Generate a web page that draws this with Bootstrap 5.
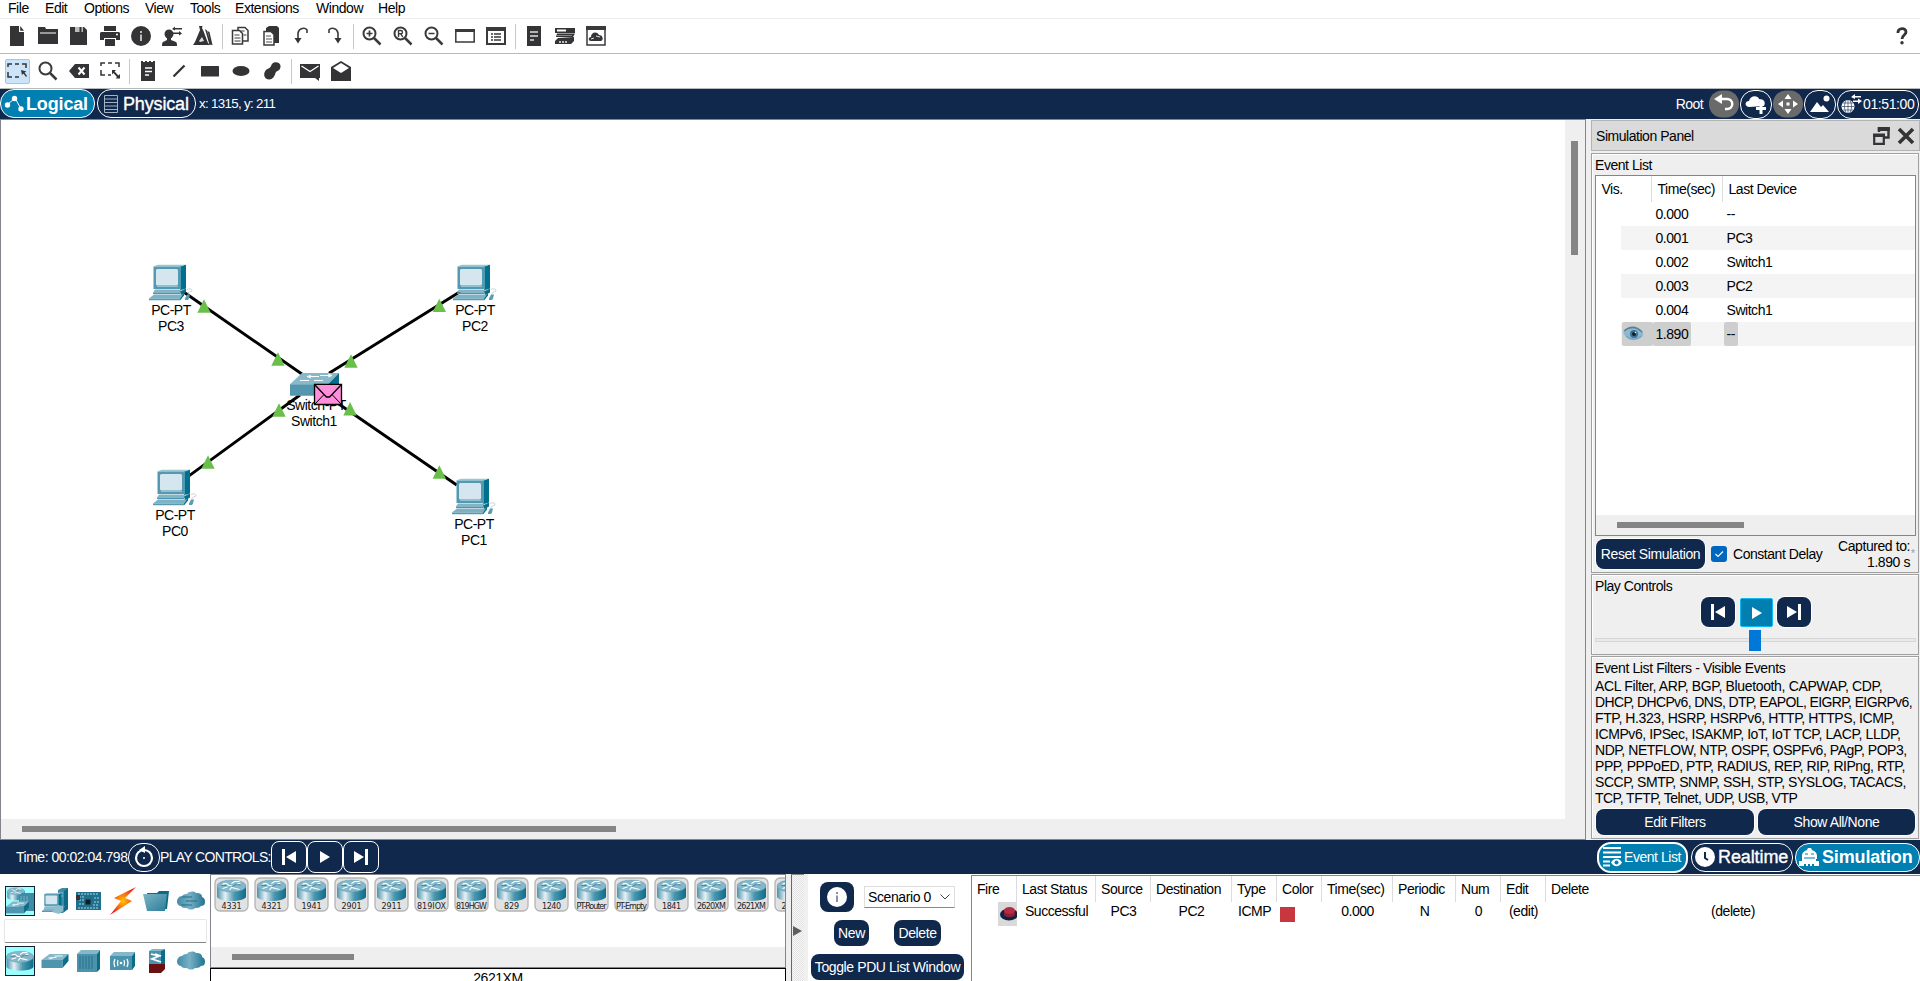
<!DOCTYPE html>
<html lang="en">
<head>
<meta charset="utf-8">
<title>Network Simulator</title>
<meta name="viewport" content="width=device-width, initial-scale=1">
<link href="https://cdn.jsdelivr.net/npm/bootstrap@5.3.0/dist/css/bootstrap.min.css" rel="stylesheet">
<style>
:root{--navy:#0f284c;--teal:#007fb0;--ink:#343436;--panel:#efefef;--edge:#82858f}
body{font:14px/16px "Liberation Sans",Arial,sans-serif;letter-spacing:-.46px;color:#000;height:981px;overflow:hidden;background:#fff}
svg{display:block;flex:none;overflow:visible}
.menubar{height:19px;border-bottom:1px solid #ececec;padding:0 0 2px 8px;line-height:15px;flex:none}
.menubar a{color:#000;text-decoration:none;flex:none}
.toolbar{height:35px;border-bottom:1px solid #b9b9b9;padding-left:1.5px;color:var(--ink);flex:none}
.tool{width:31px;height:26px;display:flex;align-items:center;justify-content:center;flex:none}
.tool.sel{background:#cce4f9;border:1px solid #91c9f7;border-radius:2px;width:25px;height:25px;margin:0 3px}
.vsep{width:1px;height:25px;background:#c8c8c8;margin:0 3px;flex:none}
.navy{background:var(--navy);color:#fff;flex:none}
.topnav{height:30px}
.pill{border:1px solid #fff;border-radius:14px;display:flex;align-items:center;height:29px;flex:none;color:#fff;white-space:nowrap;padding:0}
.pill.on{background:var(--teal)}
.big{font-size:18px;letter-spacing:-.15px}
.big.reg{-webkit-text-stroke:.35px #fff}
.workspace{width:1586px;height:721px;border:1px solid var(--edge);flex:none}
.vscroll{width:20px;background:var(--panel);padding:21px 0 0 6px}
.hscroll{height:20px;background:var(--panel);padding-top:7px;flex:none}
.thumb{background:#858585}
.side{background:var(--panel);padding-left:5px;height:721px;min-width:0;overflow:hidden}
.ptitle{height:31px;margin-top:1px;background:#dadada;border:1px solid #b3b3b3;padding:0 5px 0 4px}
.frame{border:1px solid #a0a0a0;box-shadow:inset 1px 1px #fff;width:328px;margin-top:1px;padding:0 3px}
.ptitle+.frame{margin-top:2px}
.evbox{width:321px;border:1px solid var(--edge);background:#fff;height:361px}
.evhead,.evrow{display:grid;grid-template-columns:56px 71px 1fr}
.evhead{height:26px;line-height:26px}
.evhead>div{padding-left:5.500px;border-right:1px solid #dcdcdc}
.evhead>div:last-child{border:0}
.evrow{height:24px;line-height:24px;margin-left:25px;grid-template-columns:32px 71px 1fr}
.evrow.alt{background:#f4f4f4}
.evrow span{display:inline-block;padding:0 3px;height:24px;margin-left:-.5px}
.evrow.cur span,.evrow.cur .eye{background:#cecece;border-radius:2px}
.evrow .eye{width:31px;margin-left:1px;display:flex;align-items:center;padding-left:1px}
.nbtn{background:var(--navy);color:#fff;border:0;border-radius:8px;box-shadow:0 0 0 1px #fff;display:flex;align-items:center;justify-content:center;padding:0;white-space:nowrap;flex:none;font-size:14px;line-height:16px;letter-spacing:-.4px}
.nbtn.play{background:var(--teal);border:1px solid #0bbcf2;border-radius:2px;box-shadow:none}
.chk{width:16px;height:16px;background:#0067c0;border-radius:3px}
.filters div{white-space:nowrap;height:16px}
.filters .w1{letter-spacing:-.35px}
.filters .w2{letter-spacing:-.62px}
.filters .w3{letter-spacing:-.41px}
.filters .w8{letter-spacing:-.52px}
.botnav{height:34px}
.obtn{width:36px;height:32px;border:1px solid #fff;border-radius:8px;display:flex;align-items:center;justify-content:center;flex:none}
.pick{width:30px;height:30px;display:flex;align-items:center;justify-content:center;flex:none}
.pick.sel{background:#99ffff;border:1px solid #123}
.find{width:203px;height:24px;margin:3px 0 3px 3px;border:1px solid #e7e7e7;border-bottom:1px solid #868686;border-radius:2px}
.devlist{width:576px;height:94px;border:1px solid var(--edge);overflow:hidden}
.devtile{width:34px;height:34px;flex:none}
.handle{width:13px;background:#f1f1f1 repeating-conic-gradient(#e2e2e2 0 25%,#f8f8f8 0 50%) 0 0/2px 2px;border-left:1px solid #666;border-top:1px solid #888}
.combo{width:91px;height:22px;border:1px solid #dedede;border-bottom-color:#888;padding:0 4px}
.pdu{table-layout:fixed;width:948px;border-collapse:separate;border-spacing:0}
.pdu th{font-weight:400;height:26px;padding:0 0 0 5px;border-right:1px solid #dcdcdc;white-space:nowrap}
.pdu th:last-child{border:0}
.pdu td{height:24px;padding:0 0 7px;text-align:center;white-space:nowrap}
</style>
</head>
<body class="d-flex flex-column">
<svg width="0" height="0" class="position-absolute" aria-hidden="true">
<defs>
<linearGradient id="gCyl"><stop offset="0" stop-color="#4a93ab"/><stop offset=".28" stop-color="#e6f1f5"/><stop offset=".6" stop-color="#4b97af"/><stop offset="1" stop-color="#0d6c88"/></linearGradient>
<linearGradient id="gSw" x2="1" y2="1"><stop offset="0" stop-color="#7db4c6"/><stop offset="1" stop-color="#2b7e98"/></linearGradient>
<linearGradient id="gCl"><stop offset="0" stop-color="#3f8ba5"/><stop offset=".45" stop-color="#79b0c4"/><stop offset="1" stop-color="#1f7490"/></linearGradient>
<radialGradient id="gBolt"><stop offset="0" stop-color="#ffc400"/><stop offset="1" stop-color="#f5231a"/></radialGradient>
<symbol id="pc" viewBox="0 0 44 36"><path d="M31 2l6-2v24l-6 2z" fill="#00708f"/><path d="M4.500 2L9 0h28l-5 2z" fill="#9dc6d3"/><path d="M4.500 2h27.500v22.500h-27.500z" fill="#5399b2"/><rect x="7" y="4.500" width="22" height="16.500" rx="1.500" fill="#d6e6ee"/><path d="M8 22h21" stroke="#8ec1d2" stroke-width="1"/><path d="M6 25h27l-2 3H4z" fill="#83b3c5"/><path d="M4 28h27v1.500H4z" fill="#4795ae"/><path d="M31 27l6-3v4l-5 3z" fill="#0b6f8b"/><path d="M0 34l5-4h29l-3 4z" fill="#7fb1c4"/><path d="M0 34h31v2H0z" fill="#5a9ab1"/><path d="M31 34l4-6v3l-4 5z" fill="#0e6f8b"/><path d="M36 34l2-4h3l-1 4-1 1.500h-3z" fill="#5d9db3"/><path d="M39 30c0-4 4-2 4-4s-3-2-5-1" fill="none" stroke="#a9b7bd" stroke-width=".6"/></symbol>
<symbol id="cyl" viewBox="0 0 30 22"><path d="M.5 6v11c0 2.500 6.500 4.500 14.500 4.500s14.500-2 14.500-4.500V6z" fill="url(#gCyl)"/><ellipse cx="15" cy="6.500" rx="14.500" ry="6" fill="#84b7c9" stroke="#589db3" stroke-width=".5"/><path d="M6 5c3-2 5-1 6 1h3M15 4l3-2h5m-3 3l4-1.500M6 9l5-1.500m2 3l2-2.500 4 1 4 1" fill="none" stroke="#fff" stroke-width="1.200"/><path d="M16 7l3-2 5 .3M5 6h5" fill="none" stroke="#2c7188" stroke-width=".7"/></symbol>
<symbol id="sw" viewBox="0 0 27 15"><path d="M0 7L8 1h19l-6 6z" fill="#86b8c9"/><path d="M0 7h21v8H0z" fill="#4f95ad"/><path d="M21 7l6-6v7l-6 7z" fill="#0e6d88"/><path d="M7 5l8-.6M13 3h8M11 5l-3 1" stroke="#fff" stroke-width=".9"/></symbol>
<symbol id="cloud" viewBox="0 0 28 19"><path d="M5 5c2-2 4-2 5-2 2-3 7-3 9-1 4 0 6 1 6 4 3 1 3 4 3 5 0 3-2 4-4 4-2 2-4 2-6 2-2 2-6 2-8 0-3 0-5 0-6-2-2 0-4-2-4-4 0-3 2-6 5-6z" fill="url(#gCl)"/></symbol>
<symbol id="mag" viewBox="0 0 20 20"><circle cx="7.500" cy="7.500" r="6" fill="none" stroke="#3a3a3c" stroke-width="2"/><path d="M12 12l6.500 6.500" stroke="#3a3a3c" stroke-width="2.500"/></symbol>
<symbol id="prev" viewBox="0 0 16 16"><path d="M1 0h3v16H1zM15 2v12L5 8z" fill="#fff"/></symbol>
<symbol id="next" viewBox="0 0 16 16"><path d="M12 0h3v16h-3zM1 2v12l10-6z" fill="#fff"/></symbol>
<symbol id="play" viewBox="0 0 10 12"><path d="M0 0l10 6-10 6z" fill="#fff"/></symbol>
</defs>
</svg>

<nav class="menubar d-flex align-items-center">
<a href="#" style="width:37px">File</a><a href="#" style="width:39px">Edit</a><a href="#" style="width:61px">Options</a><a href="#" style="width:45px">View</a><a href="#" style="width:45px">Tools</a><a href="#" style="width:81px">Extensions</a><a href="#" style="width:62px">Window</a><a href="#">Help</a>
</nav>

<div class="toolbar d-flex align-items-center">
<div class="tool"><svg width="20" height="20" fill="#343436"><path d="M3 0h9v6h5v14H3zM13.200 0L17 4.800h-3.800z"/></svg></div>
<div class="tool"><svg width="20" height="20" fill="#343436"><path d="M0 1h7l1 2h12v15H0z"/><path d="M2 7h16" stroke="#fff"/></svg></div>
<div class="tool"><svg width="20" height="20" fill="#343436"><path d="M1 1h14l3 3v15H1z"/><path d="M6 1h8v5H6z" fill="#bbb"/><path d="M10.500 1h2v5h-2z"/></svg></div>
<div class="tool"><svg width="20" height="20" fill="#343436"><path d="M4 0h12v5H4zM1 6h18l1 1v7h-4v-2H4v2H0V7zM5 13h10v7H5z"/><circle cx="17" cy="8.500" r="1" fill="#fff"/></svg></div>
<div class="tool"><svg width="20" height="20"><circle cx="10" cy="10" r="10" fill="#343436"/><path d="M9 8.500h2V15H9zM9 5h2v2H9z" fill="#bbb"/></svg></div>
<div class="tool"><svg width="20" height="20" fill="#343436"><circle cx="7" cy="8" r="4.500"/><path d="M5 11h4v3l5 2c1 1 1 2 1 4H0c0-2 0-3 1-4l4-2zM10 3l3-2.500V2h7v1.500h-7v1zM20 7.500L17 5v1.500h-6V8h6v1.500z"/></svg></div>
<div class="tool"><svg width="20" height="20" fill="#343436"><path d="M6 0h3.500l-.5 2 1.500 3L15 17l2 2H0l2-3L7 4z"/><path d="M12 3l2 1.500 4.500 14-2 .5zM14.500 5l2 1 3 13h-1z"/><path d="M6 15l3-4 2 4-4 1" fill="#ddd"/></svg></div>
<div class="vsep"></div>
<div class="tool"><svg width="20" height="20" fill="#fff" stroke="#3a3a3c" stroke-width="1.500"><path d="M7 1.500h7l3 3V15H7z"/><path d="M1.500 4.500h7l3 3V18h-10z"/><path d="M3.500 9h5m-5 3h6m-6 3h6M9.500 5h4m-1 4h3" stroke-width="1"/></svg></div>
<div class="tool"><svg width="20" height="20"><path d="M4 2l3-2h8l2 2v15H4z" fill="#343436"/><path d="M2 5.500h7l3 3V19H2z" fill="#fff" stroke="#3a3a3c" stroke-width="1.500"/><path d="M4 10h5m-5 3h6m-6 3h6" stroke="#555"/></svg></div>
<div class="tool"><svg width="20" height="20"><path d="M14 7V4c-2-3-8-2-9 3v8" fill="none" stroke="#3a3a3c" stroke-width="1.600"/><path d="M1.500 12h7L5 17.500z" fill="#343436"/></svg></div>
<div class="tool"><svg width="20" height="20"><path d="M5 7V4c2-3 8-2 9 3v8" fill="none" stroke="#3a3a3c" stroke-width="1.600"/><path d="M10.500 12h7L14 17.500z" fill="#343436"/></svg></div>
<div class="vsep"></div>
<div class="tool"><svg width="20" height="20"><use href="#mag" width="20" height="20"/><path d="M4.500 7.500h6m-3-3v6" stroke="#3a3a3c" stroke-width="1.700"/></svg></div>
<div class="tool"><svg width="20" height="20"><use href="#mag" width="20" height="20"/><path d="M5.500 11V4.500h2.300a1.600 1.600 0 010 3.300H6m1.800 0L9.800 11" fill="none" stroke="#3a3a3c" stroke-width="1.400"/></svg></div>
<div class="tool"><svg width="20" height="20"><use href="#mag" width="20" height="20"/><path d="M4.500 7.500h6" stroke="#3a3a3c" stroke-width="1.500"/></svg></div>
<div class="tool"><svg width="20" height="20"><rect x=".8" y="4" width="18.400" height="12" fill="#fff" stroke="#3a3a3c" stroke-width="1.500"/><path d="M0 3h20v3H0z" fill="#3a3a3c"/></svg></div>
<div class="tool"><svg width="20" height="20"><rect x="1" y="2" width="18" height="16" fill="#fff" stroke="#3a3a3c" stroke-width="2"/><path d="M0 1h20v4H0z" fill="#3a3a3c"/><path d="M5 8h2m1 0h7M5 11h2m1 0h7M5 14h2m1 0h7" stroke="#3a3a3c" stroke-width="1.300"/></svg></div>
<div class="vsep"></div>
<div class="tool"><svg width="20" height="20"><path d="M3 0h14v20H3z" fill="#343436"/><path d="M6 6h8M6 10h8M6 14h4" stroke="#ddd" stroke-width="1.300"/></svg></div>
<div class="tool"><svg width="20" height="20" fill="#343436"><path d="M0 2h20v5H0zM2 7.500h18l-2 3.500H1zM3 12l16-1v4l-3 3H0v-3z"/><path d="M2 3.500h9v2H2z" fill="#fff"/><path d="M4 16h2m1 0h2m1 0h2" stroke="#bbb" stroke-width="2"/><path d="M2 9.500h15" stroke="#999" stroke-width=".8"/></svg></div>
<div class="tool"><svg width="20" height="20"><rect x="1" y="1" width="18" height="18" fill="#fff" stroke="#3a3a3c" stroke-width="1.500"/><path d="M0 0h20v4H0z" fill="#3a3a3c"/><path d="M5 15c-3 0-3-4 0-4 0-5 6-6 8-2 4 0 5 5 2 6z" fill="#343436"/><path d="M5 13l3-1m2-2l4 1m-5 2" stroke="#ddd"/></svg></div>
<div class="tool ms-auto me-1" style="width:28px"><svg width="12" height="18"><path d="M2 6V5c0-4 8-5 8 0 0 3-4 3-4 7" fill="none" stroke="#343436" stroke-width="2.800"/><circle cx="6" cy="15.800" r="1.700" fill="#343436"/></svg></div>
</div>

<div class="toolbar d-flex align-items-center">
<div class="tool sel"><svg width="20" height="20"><path d="M1 6V3h4m3 0h4m3 0h4v4M1 11v5h4m3 0h4" fill="none" stroke="#343436" stroke-width="1.500"/><path d="M14 9l5.500 1.500-2 1L20 15l-1 1-2.500-3.500-1.500 1.500z" fill="#343436"/></svg></div>
<div class="tool"><svg width="20" height="20"><use href="#mag" width="20" height="20"/></svg></div>
<div class="tool"><svg width="20" height="20"><path d="M0 10l6-7h14v14H6z" fill="#343436"/><path d="M9.500 6.500l6 7m0-7l-6 7" stroke="#fff" stroke-width="2"/></svg></div>
<div class="tool"><svg width="20" height="20"><path d="M1 5V2h4m3 0h4m3 0h4v4M1 9v5h4m3 0h3" fill="none" stroke="#343436" stroke-width="1.500"/><path d="M12 9h4l-1.400 1.400 3.800 4L20 13v4.500h-4.500l1.500-1.500-3.600-4L12 13.500z" fill="#343436"/></svg></div>
<div class="vsep"></div>
<div class="tool"><svg width="20" height="20"><path d="M3 0h2v1h2V0h2v1h2V0h2v1h2V0h2v20H3z" fill="#343436"/><path d="M7 7h7M7 10.500h7M7 14h4" stroke="#fff" stroke-width="1.400"/></svg></div>
<div class="tool"><svg width="20" height="20"><path d="M4.500 15.500L15.500 4.500" stroke="#343436" stroke-width="2.300"/></svg></div>
<div class="tool"><svg width="20" height="20"><rect x="1" y="5" width="18" height="10.500" rx=".5" fill="#343436"/></svg></div>
<div class="tool"><svg width="20" height="20"><ellipse cx="10" cy="10" rx="8.500" ry="5" fill="#343436"/></svg></div>
<div class="tool"><svg width="20" height="20"><path d="M10 3c2-3 8-2 8.500 1.500.3 3-1 5-4 6-1.500 1-1 3-2.500 5-2 4-8 4-9.500 0-1-4 1-7 4-8 2-.5 2.500-3 3.500-4.500z" fill="#343436"/></svg></div>
<div class="vsep"></div>
<div class="tool"><svg width="20" height="20"><path d="M0 3h20v14h-1v3l-4-3H0z" fill="#343436"/><path d="M1.500 5l8.500 5.500L18.500 5" fill="none" stroke="#fff" stroke-width="1.400"/></svg></div>
<div class="tool"><svg width="20" height="20"><path d="M0 6l10-6 10 6v14H0z" fill="#343436"/><path d="M2 7l8-5 8 5-8 5z" fill="#fff"/></svg></div>
</div>

<div class="topnav navy d-flex">
<div class="pill on big fw-bold" style="width:95px;padding-left:4px"><svg style="margin-right:3px" width="18" height="17"><path d="M2 10l8-7 6 11" stroke="#fff" fill="none"/><g fill="#fff"><circle cx="2.500" cy="10" r="2.700"/><circle cx="9.500" cy="3.500" r="2.700"/><circle cx="16" cy="14" r="2.700"/></g></svg>Logical</div>
<div class="pill big reg" style="width:99px;margin-left:2px;padding-left:6px"><svg style="margin-right:5px" width="14" height="18"><path d="M.5.500h13v17H.5zM.5 4h13M.5 7.500h13M.5 11h13M.5 14.500h13" fill="none" stroke="#b5bfd0" stroke-width=".9"/></svg>Physical</div>
<div class="align-self-center" style="margin-left:3px;font-size:13.300px;letter-spacing:-.66px">x: 1315, y: 211</div>
<div class="ms-auto d-flex align-items-center">
<span style="margin-right:6px;letter-spacing:-.6px">Root</span>
<svg width="30" height="28"><rect width="30" height="27" y=".5" rx="13" fill="#6a6a6a"/><path d="M12 9h6c7 0 7 10 0 10h-2" fill="none" stroke="#fff" stroke-width="2.500"/><path d="M5 9l8-5v10z" fill="#fff"/></svg>
<div class="pill justify-content-center" style="width:32px;margin-left:1px"><svg width="22" height="20"><path d="M4 13c-5-1-4-6 0-6 1-6 9-6 10-2 5 0 7 3 5 7z" fill="#fff"/><path d="M16 9v11m-5-5.500h10" stroke="#fff" stroke-width="3"/></svg></div>
<svg style="margin:0 1px" width="30" height="28"><rect width="30" height="27" y=".5" rx="13" fill="#6a6a6a"/><path d="M15 4l3.500 5h-7zM15 24l3.500-5h-7zM5 14l5-3.500v7zM25 14l-5-3.500v7zM13.500 12.500h3v3h-3z" fill="#fff"/></svg>
<div class="pill justify-content-center" style="width:32px"><svg width="20" height="18"><path d="M0 17l7-10 4 5 2-2 6 7z" fill="#fff"/><circle cx="16.500" cy="3.500" r="3" fill="#fff"/></svg></div>
<div class="pill" style="width:82px;margin:0 1px;padding-left:3px;letter-spacing:-.4px"><svg width="22" height="22"><circle cx="7" cy="13.500" r="6.500" fill="#fff"/><path d="M1 13.500h12M7 7v13M2 10h10M2 17h10M5 7.500c-2 4-2 8 0 12m4-12c2 4 2 8 0 12" fill="none" stroke="#0f284c" stroke-width=".6"/><path d="M10 4l4-3v2h6v1.500h-6V6zM21 8l-4 3V9h-5V7.500h5v-2z" fill="#fff"/></svg>01:51:00</div>
</div>
</div>

<div class="d-flex" style="height:721px;flex:none">
<main class="workspace d-flex flex-column">
<div class="d-flex flex-fill">
<svg class="flex-fill" width="1564" height="699" viewBox="1 120 1564 699" font-size="14">
<g stroke="#000" stroke-width="2.900"><path d="M183.300 291.700L303.300 375M460 291.700L329 373.300M189.300 475.700L300 395M456.700 485L333 400"/></g>
<g fill="#6abf4b"><path id="tri" d="M204 299.300l6.700 13.400h-13.400z"/><use href="#tri" x="74" y="53"/><use href="#tri" x="235.300" y="-.6"/><use href="#tri" x="147" y="55"/><use href="#tri" x="75" y="104"/><use href="#tri" x="4" y="156"/><use href="#tri" x="146" y="102.700"/><use href="#tri" x="235.300" y="166"/></g>
<use href="#pc" x="149" y="264.500" width="44" height="36"/><use href="#pc" x="453" y="264.500" width="44" height="36"/><use href="#pc" x="153" y="469.500" width="44" height="36"/><use href="#pc" x="452" y="478.500" width="44" height="36"/>
<path d="M290 384.300L302 373h37l-11 11.300z" fill="#87b9ca"/><path d="M290 384.300h38v11.400h-38z" fill="#5297af"/><path d="M328 384.300L339 373v11l-11 11.700z" fill="#086e8b"/><path d="M309 376.500h10m-8-1l-4 1 4 1.500M320 375.500h12m-4-1.500l4 1.500-4 1.500M300 380.500h9m5 0h9" fill="none" stroke="#fff" stroke-width="1"/>
<g text-anchor="middle" fill="#000"><text x="171" y="315">PC-PT</text><text x="171" y="331">PC3</text><text x="475" y="315">PC-PT</text><text x="475" y="331">PC2</text><text x="175" y="520">PC-PT</text><text x="175" y="536">PC0</text><text x="474" y="529">PC-PT</text><text x="474" y="545">PC1</text><text x="316" y="410">Switch-PT</text><text x="314" y="426">Switch1</text></g>
<path d="M314.500 384.500h27v20h-27z" fill="#ff8edb" stroke="#000" stroke-width="1.300"/><path d="M315 404l9-9.500M341 404l-9-9.500" stroke="#000"/><path d="M315 385l9 9.500 2.500 2.500h3l2.500-2.500 9-9.500" fill="#ff8edb" stroke="#000" stroke-width="1.300"/>
</svg>
<div class="vscroll"><div class="thumb" style="width:7px;height:114px"></div></div>
</div>
<div class="hscroll"><div class="thumb" style="width:594px;height:6px;margin-left:21px"></div></div>
</main>

<aside class="side flex-fill">
<div class="ptitle d-flex align-items-center"><span class="me-auto">Simulation Panel</span>
<svg width="17" height="18" style="margin-right:8px"><path d="M6 5V1.500h9.500v9H11" fill="none" stroke="#343436" stroke-width="2.400"/><path d="M4.800 0h12v4h-12z" fill="#343436"/><path d="M1.200 8.500h9.600v8.300H1.200z" fill="#dadada" stroke="#343436" stroke-width="2.200"/><path d="M0 6.500h12v3.500H0z" fill="#343436"/></svg>
<svg width="16" height="16"><path d="M1 1l14 14M15 1L1 15" stroke="#343436" stroke-width="3.600"/></svg></div>

<section class="frame" style="height:420px">
<div style="height:21px;line-height:23px">Event List</div>
<div class="evbox d-flex flex-column">
<div class="evhead"><div>Vis.</div><div>Time(sec)</div><div>Last Device</div></div>
<div class="flex-fill">
<div class="evrow"><div></div><div><span>0.000</span></div><div><span>--</span></div></div>
<div class="evrow alt"><div></div><div><span>0.001</span></div><div><span>PC3</span></div></div>
<div class="evrow"><div></div><div><span>0.002</span></div><div><span>Switch1</span></div></div>
<div class="evrow alt"><div></div><div><span>0.003</span></div><div><span>PC2</span></div></div>
<div class="evrow"><div></div><div><span>0.004</span></div><div><span>Switch1</span></div></div>
<div class="evrow alt cur"><div class="eye"><svg width="21" height="14"><path d="M0 6c4-7 15-8 20-1v4c-6 6-14 5-17 1z" fill="#8db8d2"/><path d="M1 4c6-5 12-5 18 1" fill="none" stroke="#5b7f95" stroke-width="1.500"/><path d="M3 9c5 4 10 4 15 0" fill="none" stroke="#6f9bb8"/><circle cx="11" cy="7" r="4" fill="#3f6f92"/><circle cx="11" cy="7" r="2" fill="#10202c"/><circle cx="12.500" cy="5.500" r=".8" fill="#fff"/></svg></div><div><span>1.890</span></div><div><span>--</span></div></div>
</div>
<div class="hscroll"><div class="thumb" style="width:127px;height:6px;margin-left:21px"></div></div>
</div>
<div class="d-flex align-items-center" style="height:36px;padding-left:1px">
<button class="nbtn" style="width:109px;height:30px">Reset Simulation</button>
<div class="chk" style="margin:0 6px"><svg width="16" height="16"><path d="M4.500 8l2.500 2.500L12 5.500" fill="none" stroke="#fff" stroke-width="1.100"/></svg></div>
<span class="text-nowrap">Constant Delay</span>
<div class="ms-auto text-end text-nowrap" style="margin-right:1px;letter-spacing:-.42px">Captured to:<br>1.890 s</div><span style="color:#999;font-size:10px;width:4px">*</span>
</div>
</section>

<section class="frame" style="height:81px">
<div style="height:22px;line-height:22px">Play Controls</div>
<div class="d-flex" style="padding:0 0 0 106px;height:33px">
<button class="nbtn" style="width:34px;height:30px"><svg width="16" height="16"><use href="#prev"/></svg></button>
<button class="nbtn play" style="width:33px;height:29px;margin:1px 4px 0 5px"><svg width="10" height="12"><use href="#play"/></svg></button>
<button class="nbtn" style="width:34px;height:30px"><svg width="16" height="16"><use href="#next"/></svg></button>
</div>
<svg width="321" height="22"><rect x=".5" y="8.500" width="320" height="3" fill="#e7eaea" stroke="#d6d6d6"/><rect x="154" width="12" height="21" fill="#0078d7"/></svg>
</section>

<section class="frame" style="height:183px">
<div style="height:21px;line-height:22px;letter-spacing:-.38px">Event List Filters - Visible Events</div>
<div class="filters">
<div class="w1">ACL Filter, ARP, BGP, Bluetooth, CAPWAP, CDP,</div>
<div class="w2">DHCP, DHCPv6, DNS, DTP, EAPOL, EIGRP, EIGRPv6,</div>
<div class="w3">FTP, H.323, HSRP, HSRPv6, HTTP, HTTPS, ICMP,</div>
<div class="w3">ICMPv6, IPSec, ISAKMP, IoT, IoT TCP, LACP, LLDP,</div>
<div>NDP, NETFLOW, NTP, OSPF, OSPFv6, PAgP, POP3,</div>
<div>PPP, PPPoED, PTP, RADIUS, REP, RIP, RIPng, RTP,</div>
<div>SCCP, SMTP, SNMP, SSH, STP, SYSLOG, TACACS,</div>
<div class="w8">TCP, TFTP, Telnet, UDP, USB, VTP</div>
</div>
<div class="d-flex" style="gap:4px;padding:3px 0 0 1px"><button class="nbtn" style="width:158px;height:26px">Edit Filters</button><button class="nbtn" style="width:157px;height:26px">Show All/None</button></div>
</section>
</aside>
</div>

<div class="botnav navy d-flex align-items-center">
<span style="margin-left:16px;width:112px;white-space:nowrap;letter-spacing:-.48px">Time: 00:02:04.798</span>
<div class="pill justify-content-center" style="width:32px"><svg width="20" height="20"><circle cx="10" cy="11" r="8" fill="none" stroke="#fff" stroke-width="2.200"/><circle cx="10" cy="11" r="1" fill="#fff"/><path d="M5 3l6-4v7z" fill="#fff"/></svg></div>
<span style="width:111px;white-space:nowrap;letter-spacing:-.66px">PLAY CONTROLS:</span>
<div class="obtn"><svg width="16" height="16"><use href="#prev"/></svg></div><div class="obtn"><svg width="10" height="12"><use href="#play"/></svg></div><div class="obtn"><svg width="16" height="16"><use href="#next"/></svg></div>
<div class="ms-auto d-flex align-items-center">
<div class="pill on" style="width:91px;height:31px;border-width:2px;padding-left:4px"><svg width="19" height="20" style="margin-right:2px"><path d="M0 1h18M0 5.500h18M0 10h18M0 14.500h7M0 18.500h7" stroke="#fff" stroke-width="1.800"/><path d="M8 15.500c3-5 8-5 11 0-3 5-8 5-11 0z" fill="#fff"/><circle cx="13.500" cy="15.500" r="2" fill="#007fb0"/></svg>Event List</div>
<div class="pill big reg" style="width:102px;margin:0 2px 0 3px;padding-left:3px;letter-spacing:-.1px"><svg width="20" height="20" style="margin-right:3px"><circle cx="10" cy="10" r="10" fill="#fff"/><path d="M10 5v6l3 2" stroke="#0f284c" stroke-width="2" fill="none"/></svg>Realtime</div>
<div class="pill on big fw-bold" style="width:125px;padding-left:3px"><svg width="20" height="20" style="margin-right:3px"><path d="M3 12V9c0-4 3-5 5-6l1-2h3l1 2c2 1 5 2 5 6v3h-1v2h3v5h-5v-2h-2v2h-2v-2H9v2H7v-2H5v2H0v-5h3v-2z" fill="#fff"/><path d="M6 7h3m3 0h3M5 11h11" stroke="#007fb0" stroke-width="1"/></svg>Simulation</div>
</div>
</div>

<div class="d-flex" style="height:107px;flex:none">
<div style="width:210px;padding:12px 0 0 2px;flex:none">
<div class="d-flex" style="gap:4px;margin-left:3px">
<div class="pick sel"><svg width="28" height="28"><use href="#cyl" x="1" y="0" width="18" height="14"/><path d="M13 9l3-3h12v18H13z" fill="#3f8aa4"/><path d="M15 9v6m3-6v6m3-6v6" stroke="#77afc3"/><use href="#sw" x="0" y="13" width="23" height="14"/></svg></div>
<div class="pick" style="margin-left:1px"><svg width="28" height="28"><path d="M17 3l4-2h6v21l-5 4h-5z" fill="#3e8ba5"/><path d="M23 4l4-3v21l-4 3z" fill="#0c6c88"/><path d="M18 6h4m-4 3h4" stroke="#9ec8d6"/><use href="#pc" x="0" y="6" width="25" height="19"/><path d="M11 25l6-7 5 1v5l-4 3z" fill="#8ebdcc"/></svg></div>
<div class="pick"><svg width="28" height="28"><path d="M1 5h25v18H1z" fill="#226f8c"/><path d="M3 7h21M3 21h20M4 10h6m-6 3h5m-5 4h6m9-6h5m-5 4h5m-6 3h5" stroke="#76b6cd" stroke-width="1.300" stroke-dasharray="2 1"/><path d="M10.500 12.500h5v5h-5z" fill="#111c22"/><path d="M1 8h4v5H1z" fill="#412f2c"/></svg></div>
<div class="pick"><svg width="28" height="28"><path d="M27 0L5 11l7 3L1 28l22-14-7-3z" fill="url(#gBolt)"/></svg></div>
<div class="pick"><svg width="28" height="28"><path d="M4 6h10l2-2h10l-2 18H7z" fill="#0d6a85"/><path d="M0 7h24l-2 17H4z" fill="url(#gSw)"/></svg></div>
<div class="pick"><svg width="28" height="28"><use href="#cloud" x="0" y="4" width="28" height="19"/><path d="M5 10h10m-6 4h11M4 18h11" stroke="#236f87"/></svg></div>
</div>
<div class="find" style="margin-left:2px"></div>
<div class="d-flex" style="gap:4px;margin-left:3px">
<div class="pick sel"><svg width="28" height="22"><use href="#cyl" width="28" height="22"/></svg></div>
<div class="pick" style="margin-left:1px"><svg width="28" height="16"><use href="#sw" width="28" height="15"/></svg></div>
<div class="pick"><svg width="24" height="22"><path d="M0 4l4-4h19l-3 4z" fill="#84b7c9"/><path d="M0 4h20v18H0z" fill="#4b93ac"/><path d="M20 4l3-4v19l-3 3z" fill="#0c6c88"/><path d="M3 6v13m3-13v13m3-13v13m3-13v13m3-13v13" stroke="#296f88"/></svg></div>
<div class="pick"><svg width="26" height="18"><path d="M0 4l4-4h21l-3 4z" fill="#84b7c9"/><path d="M0 4h22v14H0z" fill="#4b93ac"/><path d="M22 4l3-4v14l-3 4z" fill="#0c6c88"/><path d="M5 7q-2 4 0 8M8 8q-1 3 0 6m9-7q2 4 0 8m-3-7q1 3 0 6" fill="none" stroke="#fff" stroke-width="1.200"/><circle cx="11" cy="11" r="1.300" fill="#fff"/></svg></div>
<div class="pick"><svg width="16" height="24"><path d="M0 2l3-2h13l-3 2z" fill="#84b7c9"/><path d="M0 2h12v13H0z" fill="#4a93ac"/><path d="M12 2l4-2v15h-4z" fill="#0c6c88"/><path d="M0 15h16v5l-4 4H0z" fill="#6a0f12"/><path d="M2 5l8 2-7 3 9 3m-6-8l6 2" stroke="#fff" stroke-width="1.800" fill="none"/></svg></div>
<div class="pick"><svg width="28" height="20"><use href="#cloud" width="28" height="19"/></svg></div>
</div>
</div>

<div style="width:576px;flex:none">
<div class="devlist d-flex flex-column">
<div class="d-flex flex-fill" style="gap:6px;padding:2px 0 0 2.500px" id="devices"></div>
<div class="hscroll"><div class="thumb" style="width:122px;height:6px;margin-left:21px"></div></div>
</div>
<div class="text-center" style="height:20px;border:1px solid #000;line-height:18px">2621XM</div>
</div>

<div style="width:5px;background:#efefef;flex:none"></div>
<div class="handle d-flex align-items-center" style="flex:none"><svg width="9" height="12" style="margin:6px 0 0 1px"><path d="M0 1l9 5-9 5z" fill="#5e5e5e"/></svg></div>
<div style="width:4px;background:#f0f0f0;flex:none"></div>

<div style="width:163px;flex:none;padding:8px 0 0 3px">
<div class="d-flex align-items-center" style="padding-left:9px;height:30px"><button class="nbtn" style="width:34px;height:30px"><svg width="20" height="20"><circle cx="10" cy="10" r="10" fill="#fff"/><path d="M9 8.500h2V15H9zM9 5h2v2H9z" fill="#8a93a3"/></svg></button>
<div class="combo d-flex align-items-center justify-content-between" style="margin-left:10px"><span style="letter-spacing:-.4px;margin-left:-1px">Scenario 0</span><svg width="10" height="6"><path d="M.5.500L5 5 9.500.5" fill="none" stroke="#444"/></svg></div></div>
<div class="d-flex" style="padding:8px 0 0 23px;gap:25px"><button class="nbtn" style="width:35px;height:26px">New</button><button class="nbtn" style="width:47px;height:26px">Delete</button></div>
<button class="nbtn" style="width:153px;height:26px;margin-top:8px;letter-spacing:-.4px">Toggle PDU List Window</button>
</div>

<div class="flex-fill" style="border:1px solid var(--edge);border-width:1px 0 0 1px;margin-top:1px">
<table class="pdu">
<colgroup><col style="width:45px"><col style="width:79px"><col style="width:55px"><col style="width:81px"><col style="width:45px"><col style="width:45px"><col style="width:71px"><col style="width:63px"><col style="width:45px"><col style="width:45px"><col></colgroup>
<tr><th>Fire</th><th>Last Status</th><th>Source</th><th>Destination</th><th>Type</th><th>Color</th><th>Time(sec)</th><th>Periodic</th><th>Num</th><th>Edit</th><th>Delete</th></tr>
<tr><td class="p-0"><div class="ms-auto" style="width:19px;height:24px;background:#d9d9d9;padding:4px 0 0 2px;overflow:hidden"><svg width="17" height="15"><ellipse cx="9" cy="8.500" rx="9" ry="6" fill="#0a2443"/><path d="M4 4v5c2 3 9 3 11 0V4z" fill="#8e1e32"/><ellipse cx="9.500" cy="4.500" rx="5.500" ry="3.500" fill="#b52a45"/></svg></div></td><td>Successful</td><td>PC3</td><td>PC2</td><td style="text-align:left;padding-left:6px">ICMP</td><td class="align-top" style="padding:5px 0 0 3px"><div style="width:15px;height:15px;background:#c8363f"></div></td><td>0.000</td><td>N</td><td>0</td><td>(edit)</td><td>(delete)</td></tr>
</table>
</div>
</div>

<script src="https://cdn.jsdelivr.net/npm/bootstrap@5.3.0/dist/js/bootstrap.bundle.min.js"></script>
<script>
// Router models on the palette: label and the width it is set to.
const models=[["4331",20],["4321",20],["1941",20],["2901",20],["2911",20],["819IOX",29],["819HGW",31],["829",15],["1240",19],["PT-Router",30],["PT-Empty",31],["1841",19],["2620XM",29],["2621XM",29],["2811",20]];
document.getElementById("devices").innerHTML=models.map(([n,w])=>`<div class="devtile"><svg width="34" height="34"><rect x="1" y="1" width="33" height="33" rx="5" fill="#e2e2e2" stroke="#b4b4b4" stroke-width="1.300"/><use href="#cyl" x="2.500" y="2.500" width="30" height="22"/><text x="17.500" y="31.500" text-anchor="middle" textLength="${w}" style="font:8px 'DejaVu Sans',sans-serif;letter-spacing:0" fill="#222">${n}</text></svg></div>`).join("");
</script>
</body>
</html>
